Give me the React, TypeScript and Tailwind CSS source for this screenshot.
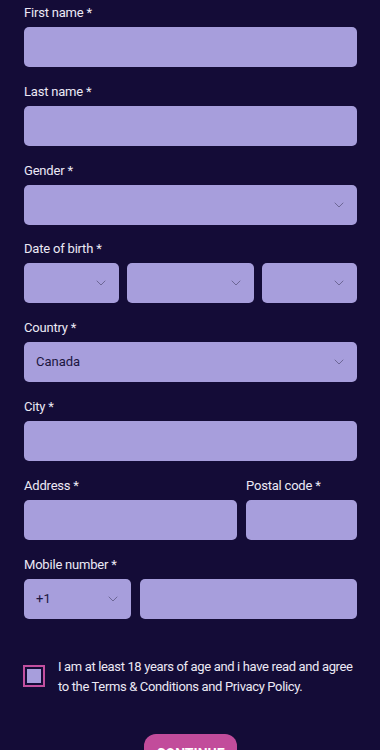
import { ChevronDown } from "lucide-react";

const font = { fontFamily: "Roboto, 'Noto Sans', sans-serif" };

const Label = ({ text }: { text: string }) => (
  <div className="h-5 text-[13px] leading-5 tracking-[-0.2px] text-[#ece9f5] mb-1">{text} *</div>
);

const Box = ({ className = "", children }: { className?: string; children?: React.ReactNode }) => (
  <div className={`h-10 rounded-[5px] bg-[#a79edc] flex items-center pl-3 pr-[10px] ${className}`}>{children}</div>
);

const Select = ({ className = "", value }: { className?: string; value?: string }) => (
  <Box className={`justify-between ${className}`}>
    <span className="text-[13px] text-[#1c1640]">{value}</span>
    <ChevronDown className="h-4 w-4 text-[#6d6796]" strokeWidth={1.5} />
  </Box>
);

export default function App() {
  return (
    <div className="min-h-screen bg-[#140c37] pl-6 pr-[23px] pt-[3px]" style={font}>
      <div className="flex flex-col gap-[14.8px]">
        <div>
          <Label text="First name" />
          <Box />
        </div>
        <div>
          <Label text="Last name" />
          <Box />
        </div>
        <div>
          <Label text="Gender" />
          <Select />
        </div>
        <div>
          <Label text="Date of birth" />
          <div className="flex gap-2">
            <Select className="w-[95px]" />
            <Select className="flex-1" />
            <Select className="w-[95px]" />
          </div>
        </div>
        <div>
          <Label text="Country" />
          <Select value="Canada" />
        </div>
        <div>
          <Label text="City" />
          <Box />
        </div>
        <div className="flex gap-[9px]">
          <div className="flex-1">
            <Label text="Address" />
            <Box />
          </div>
          <div className="w-[111px]">
            <Label text="Postal code" />
            <Box />
          </div>
        </div>
        <div>
          <Label text="Mobile number" />
          <div className="flex gap-[9px]">
            <Select className="w-[107px]" value="+1" />
            <Box className="flex-1" />
          </div>
        </div>
      </div>

      <div className="flex items-start gap-[13px] mt-[38px] -ml-px">
        <div className="mt-[8px] h-[22px] w-[22px] shrink-0 border-2 border-[#c24f9f] bg-[#140c37] p-[2px]">
          <div className="h-full w-full bg-[#a79edc]" />
        </div>
        <p className="text-[13px] leading-5 tracking-[-0.35px] text-[#ece9f5]">
          I am at least 18 years of age and i have read and agree to the Terms &amp; Conditions and Privacy Policy.
        </p>
      </div>

      <div className="flex justify-center mt-[37px] pb-10">
        <button className="rounded-xl bg-[#c24c9b] px-3 pt-[10px] pb-3 text-[14px] font-bold text-white">
          CONTINUE
        </button>
      </div>
    </div>
  );
}
